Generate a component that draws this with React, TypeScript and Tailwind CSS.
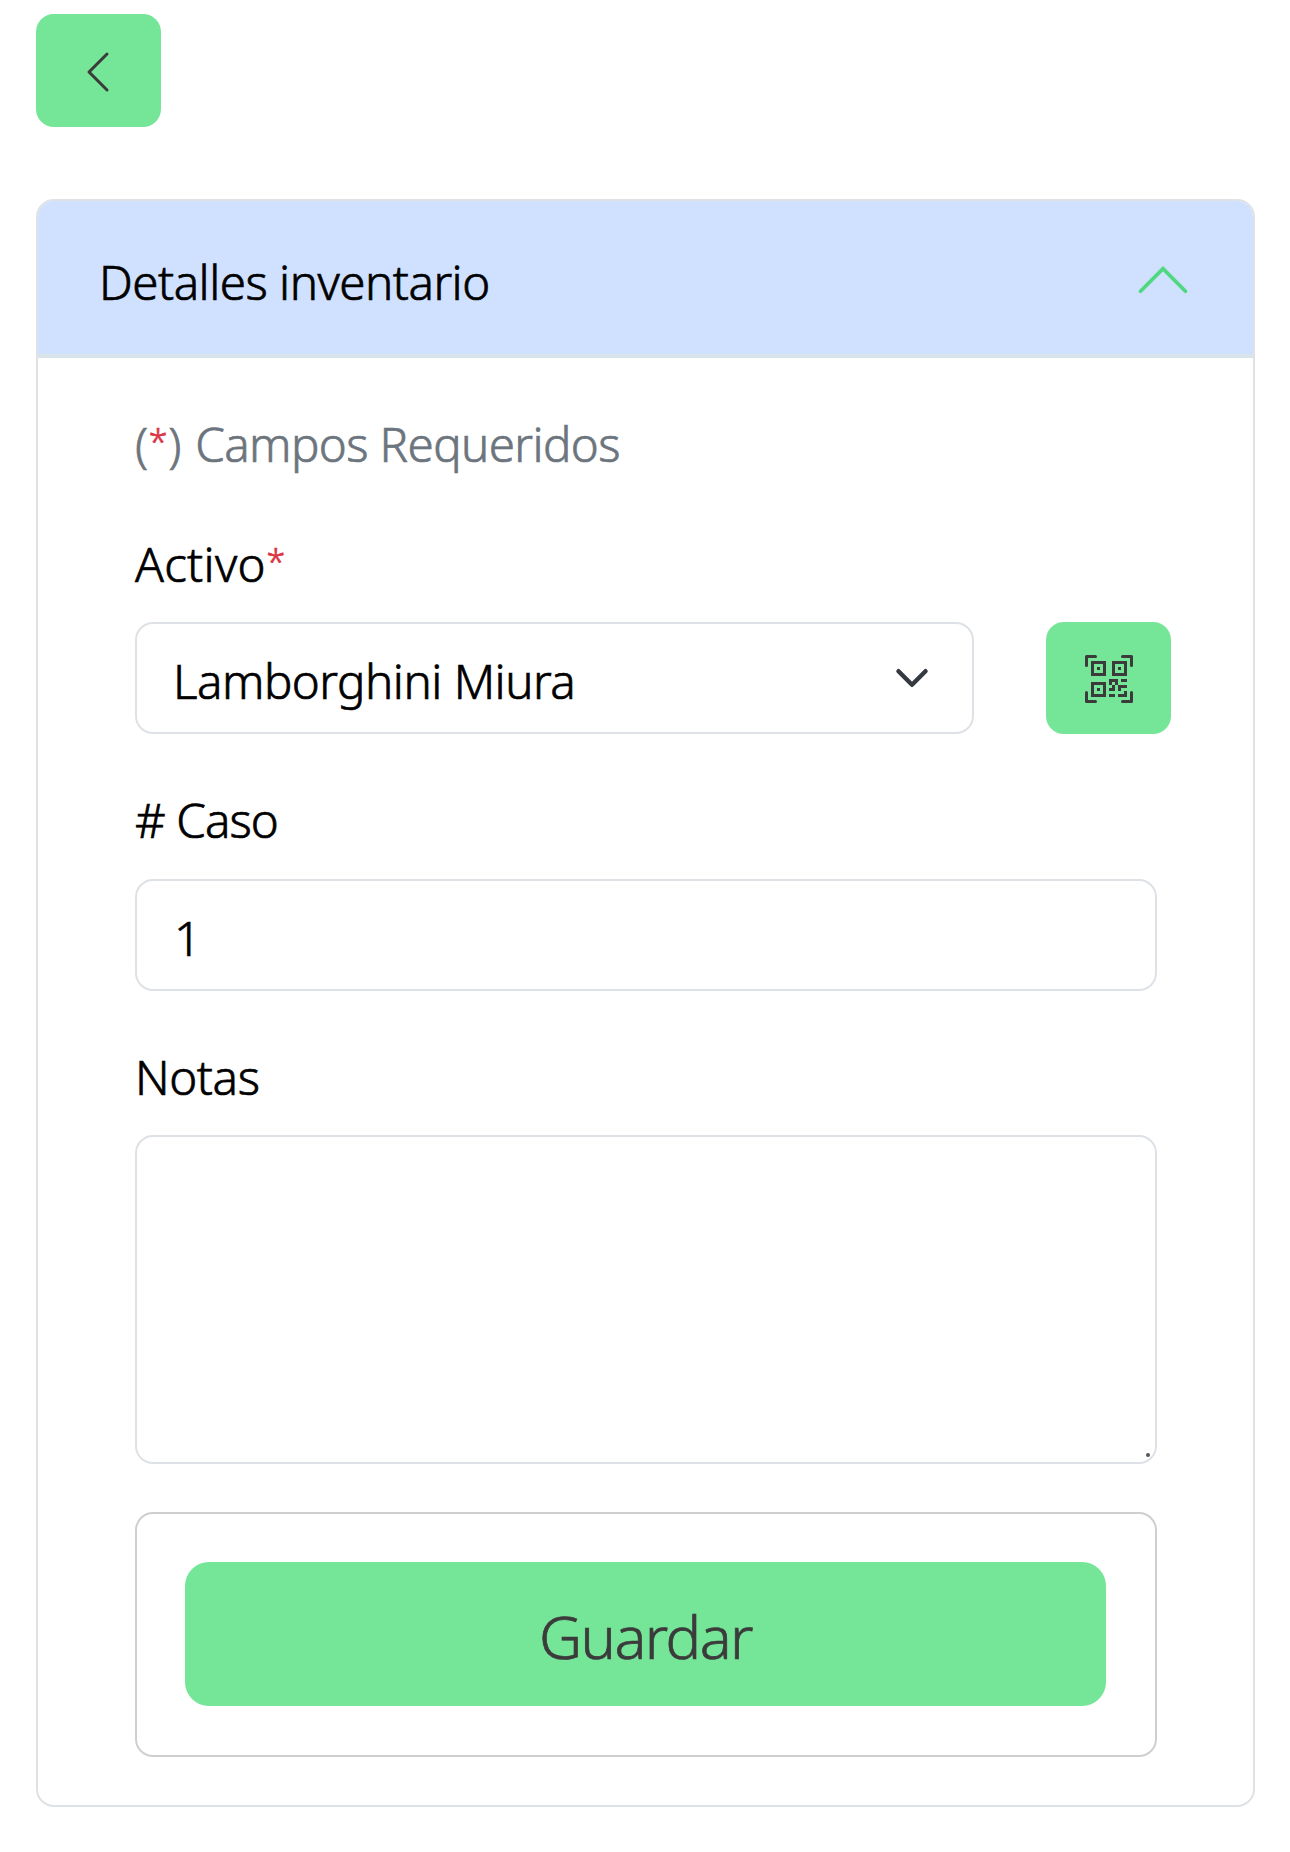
import { BsChevronLeft, BsQrCodeScan } from "react-icons/bs";

function Required() {
  return (
    <span className="inline-block w-[20px] text-center align-[7px] text-[34px] leading-none tracking-normal text-[#dc3545]">
      *
    </span>
  );
}

export default function App() {
  return (
    <div className="min-h-[1852px] w-[1290px] bg-white pl-[36px] pt-[14px] font-['Noto_Sans','Open_Sans',sans-serif] text-[47.5px] font-light leading-[72px] text-black [-webkit-text-stroke:0.7px]">
      <button className="flex h-[113px] w-[125px] items-center justify-center rounded-[18px] bg-[#75e598] pr-px pt-[3px] text-[#3b3b3b]">
        <BsChevronLeft className="size-[48px]" />
      </button>

      <section className="mt-[72px] h-[1608px] w-[1219px] overflow-hidden rounded-[18px] border-2 border-[#dee2e6]">
        <header className="flex h-[157px] items-center justify-between border-b-4 border-[#d9e3ea] bg-[#cfe1ff] pl-[61px] pr-[60px]">
          <h2 className="pt-[9px]">
            <span className="tracking-[-0.5px]">Detalles inventario</span>
          </h2>
          <svg className="mt-[4px] size-[60px]" viewBox="0 0 16 16" fill="none" stroke="#50d880" strokeLinecap="round">
            <path d="m2 11 6-6 6 6" />
          </svg>
        </header>

        <form className="flex w-[1119px] flex-col pl-[97px] pt-[50px]">
          <p className="h-[72px] text-[#6c757d]">
            <span>(</span>
            <Required />
            <span>)</span>
            <span className="ml-[2px] tracking-[-0.6px]"> Campos Requeridos</span>
          </p>

          <label className="mt-[48px] h-[72px]">
            <span className="tracking-[0.3px]">Activo</span>
            <Required />
          </label>
          <div className="mt-[22px] flex w-[1036px] items-center justify-between">
            <div className="flex h-[112px] w-[839px] items-center justify-between rounded-[18px] border-2 border-[#dee2e6] pl-[36px] pr-[42px]">
              <span className="pt-[5px] tracking-[-0.5px]">Lamborghini Miura</span>
              <svg className="size-[36px]" viewBox="0 0 16 16" fill="none" stroke="#343a40" strokeWidth="2" strokeLinecap="round" strokeLinejoin="round">
                <path d="m2 5 6 6 6-6" />
              </svg>
            </div>
            <button type="button" className="flex h-[112px] w-[125px] items-center justify-center rounded-[18px] bg-[#75e598] pt-[2px] text-[#3b3b3b]">
              <BsQrCodeScan className="size-[48px]" />
            </button>
          </div>

          <label className="mt-[50px] tracking-[-0.9px]"># Caso</label>
          <div className="mt-[23px] flex h-[112px] items-center rounded-[18px] border-2 border-[#dee2e6] pl-[37px] pt-[5px]">1</div>

          <label className="mt-[50px] tracking-[-0.4px]">Notas</label>
          <div className="mt-[22px] flex h-[329px] items-end justify-end rounded-[18px] border-2 border-[#dee2e6] pb-[5px] pr-[5px]">
            <span className="size-[4px] rounded-full bg-[#555]" />
          </div>

          <div className="mt-[48px] flex h-[245px] items-center justify-center rounded-[18px] border-2 border-[#cfcfcf] pb-px pr-px">
            <button type="button" className="h-[144px] w-[921px] rounded-[24px] bg-[#75e598] pt-[4px] text-[59.5px] leading-[90px] tracking-[-1.5px] text-[#3b3b3b]">
              Guardar
            </button>
          </div>
        </form>
      </section>
    </div>
  );
}
